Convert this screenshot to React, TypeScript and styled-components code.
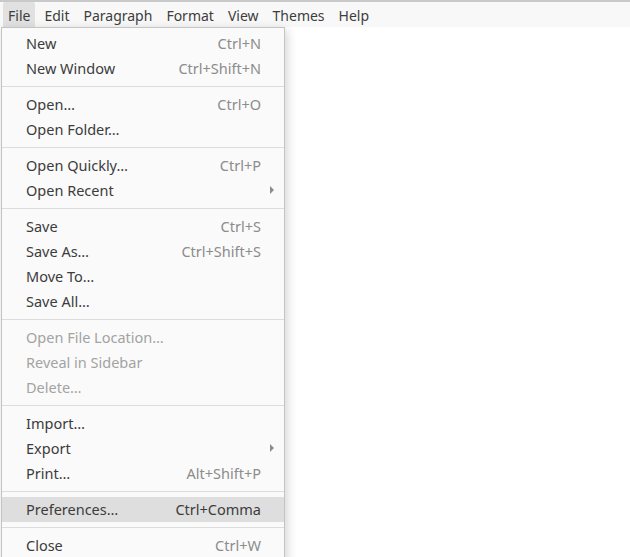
import React from "react";
import styled, { createGlobalStyle } from "styled-components";

const GlobalStyle = createGlobalStyle`
  html, body {
    margin: 0;
    padding: 0;
    background: #ffffff;
    font-family: "Noto Sans", "Open Sans", sans-serif;
  }
`;

const Window = styled.div`
  position: relative;
  width: 630px;
  height: 557px;
  overflow: hidden;
  background: #ffffff;
  border-top: 2px solid #c9c9c9;
  box-sizing: border-box;
`;

const MenuBar = styled.div`
  display: flex;
  align-items: stretch;
  height: 25px;
  padding-left: 3px;
  background: #f8f8f8;
`;

const BarItem = styled.div<{ $active?: boolean }>`
  display: flex;
  align-items: center;
  padding: 2px 5px 0;
  margin-right: 4px;
  font-size: 14px;
  color: #3d3d3d;
  background: ${(p) => (p.$active ? "#e1e1e1" : "transparent")};
  border-radius: 2px 2px 0 0;
`;

const Dropdown = styled.div`
  position: absolute;
  left: 1px;
  top: 25px;
  width: 282px;
  padding: 3px 0 4px;
  background: #fafafa;
  border: 1px solid #c4c4c4;
  box-shadow: 2px 3px 10px rgba(0, 0, 0, 0.18);
`;

const Item = styled.div<{ $disabled?: boolean; $hover?: boolean }>`
  display: flex;
  align-items: center;
  box-sizing: border-box;
  height: 25px;
  padding: 0 23px 2px 24px;
  font-size: 14.5px;
  color: ${(p) => (p.$disabled ? "#a3a3a3" : "#3c3c3c")};
  background: ${(p) => (p.$hover ? "#dedede" : "transparent")};
`;

const Label = styled.span`
  flex: 1;
`;

const Shortcut = styled.span<{ $hover?: boolean }>`
  color: ${(p) => (p.$hover ? "#3c3c3c" : "#8c8c8c")};
`;

const Arrow = styled.span`
  width: 0;
  height: 0;
  margin-right: -13px;
  border-top: 4px solid transparent;
  border-bottom: 4px solid transparent;
  border-left: 4px solid #8c8c8c;
`;

const Separator = styled.div`
  height: 1px;
  margin: 5px 0;
  background: #dcdcdc;
`;

type Entry =
  | { sep: true }
  | {
      label: string;
      shortcut?: string;
      submenu?: boolean;
      disabled?: boolean;
      hover?: boolean;
    };

const entries: Entry[] = [
  { label: "New", shortcut: "Ctrl+N" },
  { label: "New Window", shortcut: "Ctrl+Shift+N" },
  { sep: true },
  { label: "Open…", shortcut: "Ctrl+O" },
  { label: "Open Folder…" },
  { sep: true },
  { label: "Open Quickly…", shortcut: "Ctrl+P" },
  { label: "Open Recent", submenu: true },
  { sep: true },
  { label: "Save", shortcut: "Ctrl+S" },
  { label: "Save As…", shortcut: "Ctrl+Shift+S" },
  { label: "Move To…" },
  { label: "Save All…" },
  { sep: true },
  { label: "Open File Location…", disabled: true },
  { label: "Reveal in Sidebar", disabled: true },
  { label: "Delete…", disabled: true },
  { sep: true },
  { label: "Import…" },
  { label: "Export", submenu: true },
  { label: "Print…", shortcut: "Alt+Shift+P" },
  { sep: true },
  { label: "Preferences…", shortcut: "Ctrl+Comma", hover: true },
  { sep: true },
  { label: "Close", shortcut: "Ctrl+W" },
];

const barItems = ["File", "Edit", "Paragraph", "Format", "View", "Themes", "Help"];

export default function App() {
  return (
    <Window>
      <GlobalStyle />
      <MenuBar>
        {barItems.map((name, i) => (
          <BarItem key={name} $active={i === 0}>
            {name}
          </BarItem>
        ))}
      </MenuBar>
      <Dropdown>
        {entries.map((e, i) =>
          "sep" in e ? (
            <Separator key={i} />
          ) : (
            <Item key={i} $disabled={e.disabled} $hover={e.hover}>
              <Label>{e.label}</Label>
              {e.shortcut && <Shortcut $hover={e.hover}>{e.shortcut}</Shortcut>}
              {e.submenu && <Arrow />}
            </Item>
          )
        )}
      </Dropdown>
    </Window>
  );
}
